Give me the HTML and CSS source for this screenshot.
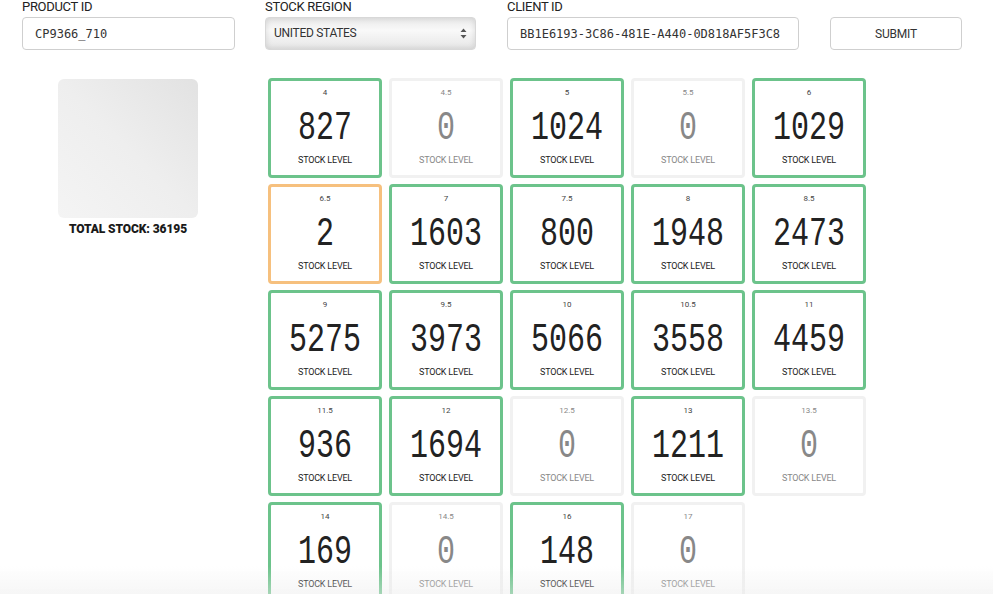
FILE: index.html
```html
<!DOCTYPE html>
<html>
<head>
<meta charset="utf-8">
<link rel="stylesheet" href="styles.css">
</head>
<body>
<header class="form-row">
  <div class="field f-product">
    <label class="label">PRODUCT ID</label>
    <div class="input mono">CP9366_710</div>
  </div>
  <div class="field f-region">
    <label class="label">STOCK REGION</label>
    <div class="select">
      <span>UNITED STATES</span>
      <svg class="arrows" width="7" height="11" viewBox="0 0 7 11"><path d="M3.5 0.5 L6.5 4 L0.5 4 Z M3.5 10.5 L6.5 7 L0.5 7 Z" fill="#555"/></svg>
    </div>
  </div>
  <div class="field f-client">
    <label class="label">CLIENT ID</label>
    <div class="input mono">BB1E6193-3C86-481E-A440-0D818AF5F3C8</div>
  </div>
  <div class="field f-submit">
    <button class="submit">SUBMIT</button>
  </div>
</header>
<main class="content">
  <aside class="side">
    <div class="product-img"></div>
    <div class="total">TOTAL STOCK: 36195</div>
  </aside>
  <section class="grid">
    <div class="card ok"><div class="size">4</div><div class="num"><span>827</span></div><div class="lvl">STOCK LEVEL</div></div>
    <div class="card zero"><div class="size">4.5</div><div class="num"><span>0</span></div><div class="lvl">STOCK LEVEL</div></div>
    <div class="card ok"><div class="size">5</div><div class="num"><span>1024</span></div><div class="lvl">STOCK LEVEL</div></div>
    <div class="card zero"><div class="size">5.5</div><div class="num"><span>0</span></div><div class="lvl">STOCK LEVEL</div></div>
    <div class="card ok"><div class="size">6</div><div class="num"><span>1029</span></div><div class="lvl">STOCK LEVEL</div></div>

    <div class="card low"><div class="size">6.5</div><div class="num"><span>2</span></div><div class="lvl">STOCK LEVEL</div></div>
    <div class="card ok"><div class="size">7</div><div class="num"><span>1603</span></div><div class="lvl">STOCK LEVEL</div></div>
    <div class="card ok"><div class="size">7.5</div><div class="num"><span>800</span></div><div class="lvl">STOCK LEVEL</div></div>
    <div class="card ok"><div class="size">8</div><div class="num"><span>1948</span></div><div class="lvl">STOCK LEVEL</div></div>
    <div class="card ok"><div class="size">8.5</div><div class="num"><span>2473</span></div><div class="lvl">STOCK LEVEL</div></div>

    <div class="card ok"><div class="size">9</div><div class="num"><span>5275</span></div><div class="lvl">STOCK LEVEL</div></div>
    <div class="card ok"><div class="size">9.5</div><div class="num"><span>3973</span></div><div class="lvl">STOCK LEVEL</div></div>
    <div class="card ok"><div class="size">10</div><div class="num"><span>5066</span></div><div class="lvl">STOCK LEVEL</div></div>
    <div class="card ok"><div class="size">10.5</div><div class="num"><span>3558</span></div><div class="lvl">STOCK LEVEL</div></div>
    <div class="card ok"><div class="size">11</div><div class="num"><span>4459</span></div><div class="lvl">STOCK LEVEL</div></div>

    <div class="card ok"><div class="size">11.5</div><div class="num"><span>936</span></div><div class="lvl">STOCK LEVEL</div></div>
    <div class="card ok"><div class="size">12</div><div class="num"><span>1694</span></div><div class="lvl">STOCK LEVEL</div></div>
    <div class="card zero"><div class="size">12.5</div><div class="num"><span>0</span></div><div class="lvl">STOCK LEVEL</div></div>
    <div class="card ok"><div class="size">13</div><div class="num"><span>1211</span></div><div class="lvl">STOCK LEVEL</div></div>
    <div class="card zero"><div class="size">13.5</div><div class="num"><span>0</span></div><div class="lvl">STOCK LEVEL</div></div>

    <div class="card ok"><div class="size">14</div><div class="num"><span>169</span></div><div class="lvl">STOCK LEVEL</div></div>
    <div class="card zero"><div class="size">14.5</div><div class="num"><span>0</span></div><div class="lvl">STOCK LEVEL</div></div>
    <div class="card ok"><div class="size">16</div><div class="num"><span>148</span></div><div class="lvl">STOCK LEVEL</div></div>
    <div class="card zero"><div class="size">17</div><div class="num"><span>0</span></div><div class="lvl">STOCK LEVEL</div></div>
  </section>
</main>
<div class="fade"></div>
</body>
</html>
```
FILE: styles.css
```css
html, body {
  margin: 0;
  padding: 0;
  background: #fff;
}
body {
  font-family: "Roboto", "Liberation Sans", sans-serif;
  color: #222;
  height: 594px;
  overflow: hidden;
}
.form-row {
  display: flex;
  padding-left: 22px;
  gap: 30px;
  align-items: flex-end;
}
.label {
  display: block;
  font-size: 13px;
  line-height: 14px;
  height: 14px;
  margin-bottom: 3px;
  color: #222;
  letter-spacing: -0.3px;
}
.f-product { width: 213px; }
.f-region { width: 211px; }
.f-client { width: 292px; margin-left: 1px; }
.f-submit { width: 132px; margin-left: 1px; }
.input {
  box-sizing: border-box;
  height: 33px;
  border: 1px solid #cfcfcf;
  border-radius: 4px;
  padding-left: 12px;
  display: flex;
  align-items: center;
  font-size: 12px;
  color: #333;
  white-space: nowrap;
  overflow: hidden;
}
.mono {
  font-family: "DejaVu Sans Mono", "Liberation Mono", monospace;
  font-size: 12px;
}
.select {
  box-sizing: border-box;
  height: 33px;
  border-radius: 4px;
  border: 1px solid #d8d8d8;
  background: linear-gradient(to bottom, #e9e9e9 0%, #f9f9f9 40%, #e6e6e6 100%);
  box-shadow: inset 0 0 6px rgba(0,0,0,0.12);
  display: flex;
  align-items: center;
  justify-content: space-between;
  padding: 0 8px 0 8px;
  font-size: 12px;
  letter-spacing: -0.3px;
  color: #333;
}
.select span { padding-bottom: 2px; }
.arrows { display: block; }
.submit {
  box-sizing: border-box;
  width: 132px;
  height: 33px;
  background: #fff;
  border: 1px solid #cfcfcf;
  border-radius: 4px;
  font-family: inherit;
  font-size: 12px;
  letter-spacing: -0.2px;
  color: #333;
  padding: 0;
}
.content {
  display: flex;
  margin-top: 28px;
}
.side {
  width: 256px;
  display: flex;
  flex-direction: column;
  align-items: center;
  padding-top: 1px;
}
.product-img {
  width: 140px;
  height: 139px;
  border-radius: 6px;
  background: linear-gradient(to bottom left, #e2e2e2 0%, #eeeeee 50%, #f4f4f4 100%);
}
.total {
  margin-top: 4px;
  font-weight: 900;
  font-size: 12px;
  color: #1a1a1a;
  letter-spacing: -0.1px;
}
.grid {
  margin-left: 12px;
  display: grid;
  grid-template-columns: repeat(5, 114px);
  grid-auto-rows: 100px;
  column-gap: 7px;
  row-gap: 6px;
}
.card {
  box-sizing: border-box;
  border: 3px solid #6cc38b;
  border-radius: 4px;
  background: #fff;
  display: flex;
  flex-direction: column;
  align-items: center;
}
.card.low { border-color: #f6c07e; }
.card.zero { border: 3px solid #f1f1f1; }
.size {
  margin-top: 7px;
  font-size: 8px;
  line-height: 9px;
  color: #444;
}
.num {
  margin-top: 16px;
  height: 32px;
  line-height: 32px;
  font-family: "Liberation Mono", "DejaVu Sans Mono", monospace;
  font-size: 40px;
  color: #222;
  display: flex;
  justify-content: center;
}
.num span {
  display: inline-block;
  transform: scaleX(0.75);
}
.lvl {
  margin-top: 10px;
  font-size: 9px;
  line-height: 10px;
  letter-spacing: -0.2px;
  color: #222;
}
.zero .size, .zero .lvl { color: #888; }
.zero .num { color: #888; }
.fade {
  position: fixed;
  left: 0;
  right: 0;
  bottom: 0;
  height: 28px;
  background: linear-gradient(to bottom, rgba(235,235,235,0) 0%, rgba(235,235,235,0.45) 100%);
  pointer-events: none;
}
```
